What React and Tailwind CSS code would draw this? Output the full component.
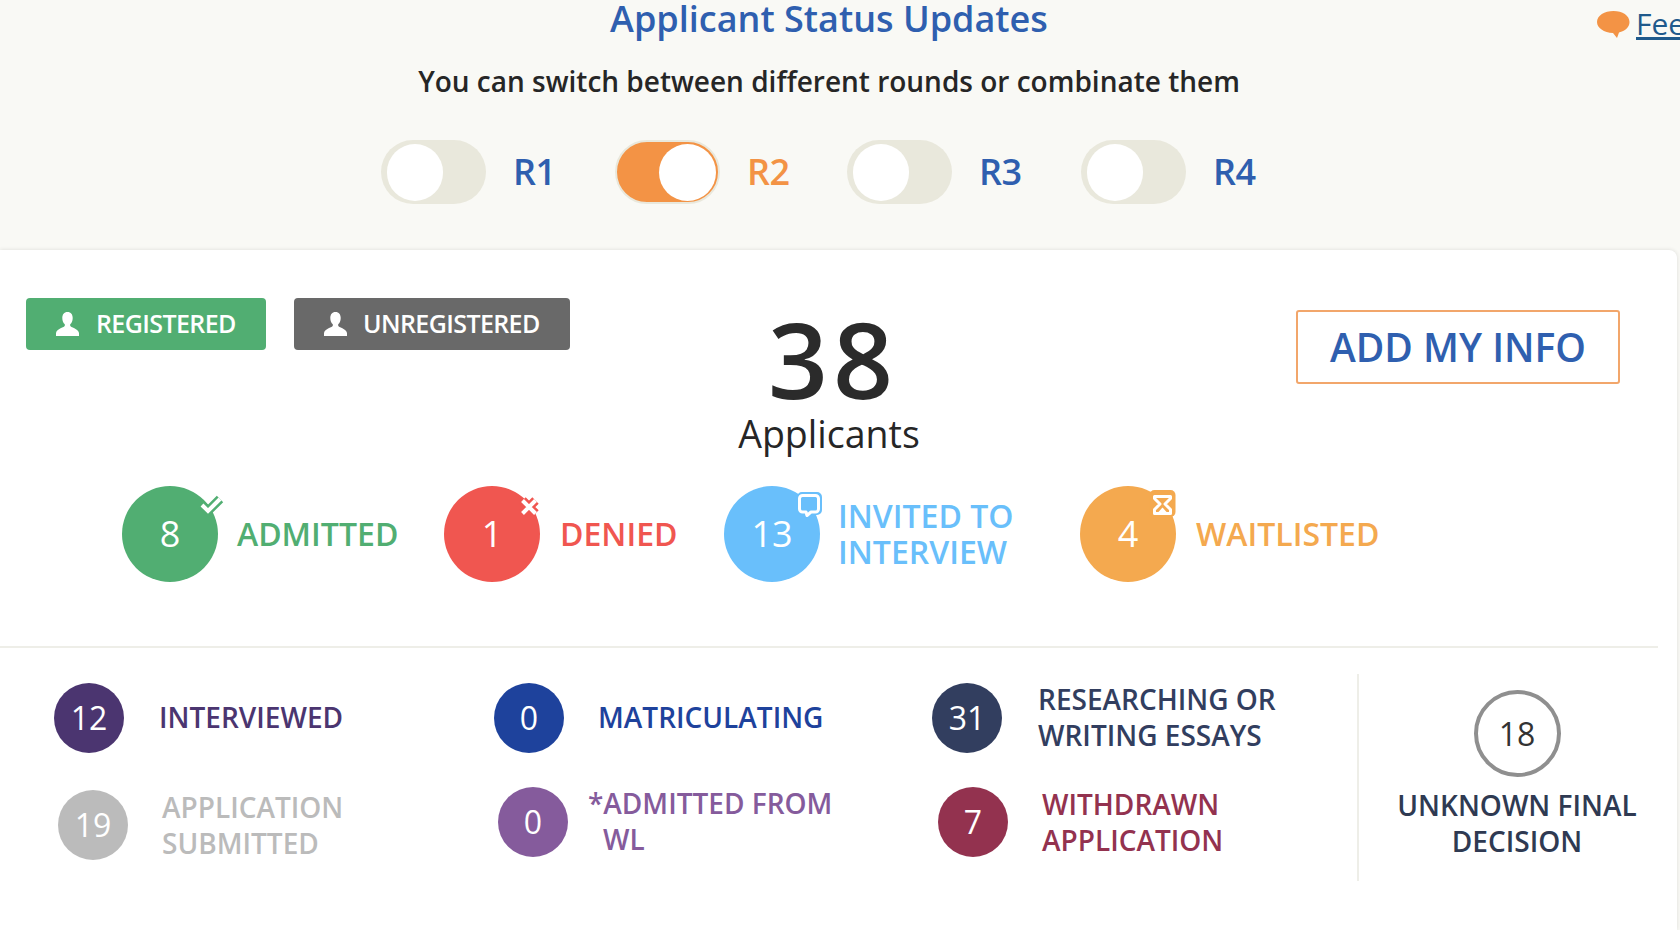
import React from 'react';

const rounds = [
  { label: 'R1', cell: 'w-[234px]', active: false },
  { label: 'R2', cell: 'w-[232px]', active: true },
  { label: 'R3', cell: 'w-[234px]', active: false },
  { label: 'R4', cell: 'w-[200px]', active: false },
];

const PersonIcon = () => (
  <svg width="23" height="24" viewBox="0 0 23 24" fill="#fff">
    <path d="M11.5 0C8 0 6.3 2.6 6.3 6c0 2.6 1 5 2.5 6.3v1.5C8.800 15.500 0.500 16.500 0 21v3h23v-3c-.5-4.500-8.800-5.500-8.800-7.200v-1.500c1.500-1.300 2.500-3.700 2.500-6.300 0-3.400-1.700-6-5.200-6z" />
  </svg>
);

const CheckBadge = () => (
  <svg width="27" height="21" viewBox="0 0 27 21" fill="none" className="absolute left-[76px] top-[8px] overflow-visible">
    <path d="M4 11 L10 17 L22 5" stroke="#51ae72" strokeWidth="9" />
    <path d="M4 11 L10 17 L22 5" stroke="#fff" strokeWidth="4" />
  </svg>
);

const CrossBadge = () => (
  <svg width="24" height="24" viewBox="0 0 24 24" fill="none" className="absolute left-[75px] top-[8px] overflow-visible">
    <path d="M3.500 6.500 L16.500 19.500 M16.500 6.500 L3.500 19.500" stroke="#f05650" strokeWidth="9" />
    <path d="M3.500 6.500 L16.500 19.500 M16.500 6.500 L3.500 19.500" stroke="#fff" strokeWidth="4" />
  </svg>
);

const BubbleBadge = () => (
  <svg width="25" height="28" viewBox="0 0 25 28" className="absolute left-[73px] top-[6px]">
    <path d="M5 0h15a5 5 0 0 1 5 5v13a5 5 0 0 1-5 5h-5l-5 5-2-5H5a5 5 0 0 1-5-5V5a5 5 0 0 1 5-5z" fill="#69bffb" />
    <path d="M5.500 3.500h13a3 3 0 0 1 3 3v10.500a3 3 0 0 1-3 3h-4.500l-4 3.500-1-3.500H5.500a3 3 0 0 1-3-3V6.500a3 3 0 0 1 3-3z" fill="#69bffb" stroke="#fff" strokeWidth="3" strokeLinejoin="round" />
  </svg>
);

const HourglassBadge = () => (
  <svg width="27" height="27" viewBox="0 0 27 27" className="absolute left-[69px] top-[4px]">
    <rect x="0.500" y="0" width="26" height="27" rx="5" fill="#f4a94f" />
    <path d="M5.500 6.500h16v2l-5.500 5.500 5.500 5.500v4h-16v-4l5.500-5.500-5.500-5.500z" fill="#f4a94f" stroke="#fff" strokeWidth="3" strokeLinejoin="round" />
    <path d="M9 22.500h9l-4.500-5z" fill="#fff" />
  </svg>
);

const StatusItem = ({ value, bg, text, cell, gap, badge, children }) => (
  <div className={`flex items-center ${cell}`}>
    <div className={`relative w-24 h-24 rounded-full flex items-center justify-center text-white text-[36px] shrink-0 ${bg}`}>
      {value}
      {badge}
    </div>
    <div className={`text-[32px] leading-[36px] font-semibold ${text} ${gap}`}>{children}</div>
  </div>
);

const SmallItem = ({ value, bg, text, className, gap, children }) => (
  <div className={`flex items-center ${className}`}>
    <div className={`w-[70px] h-[70px] rounded-full flex items-center justify-center text-white text-[32px] shrink-0 ${bg}`}>
      {value}
    </div>
    <div className={`text-[28px] leading-[36px] font-semibold ${text} ${gap}`}>{children}</div>
  </div>
);

export default function App() {
  return (
    <div className="relative w-[1680px] h-[930px] overflow-hidden bg-[#f9f9f5] font-['Open_Sans',sans-serif]">
      {/* Feedback tab */}
      <div className="absolute left-[1597px] top-[4px] flex items-center gap-[6px] whitespace-nowrap">
        <svg width="33" height="30" viewBox="0 0 33 30">
          <path d="M16.500 2C7.500 2 0 6.500 0 13c0 6 7 10.500 16 11l4 5 2-5.500c6-1.500 10.500-5 10.500-10.500C32.500 6.500 25.500 2 16.500 2z" fill="#f39345" />
        </svg>
        <a className="text-[30px] leading-[40px] text-[#1f5a8c] underline">Feedback</a>
      </div>

      <header className="h-[250px] w-[1658px] flex flex-col items-center">
        <h1 className="text-[36px] leading-[38px] font-semibold text-[#2f5faf]">Applicant Status Updates</h1>
        <p className="mt-[25px] text-[28px] leading-[36px] font-semibold text-[#262626]">
          You can switch between different rounds or combinate them
        </p>
        <div className="mt-[41px] self-start ml-[381px] flex">
          {rounds.map((r) => (
            <div key={r.label} className={`flex items-center ${r.cell}`}>
              {r.active ? (
                <div className="w-[105px] h-[64px] rounded-full bg-[#f39345] border-2 border-[#e9e8dc] flex items-center justify-end pr-[2px]">
                  <div className="w-[57px] h-[57px] rounded-full bg-white" />
                </div>
              ) : (
                <div className="w-[105px] h-[64px] rounded-full bg-[#e9e8dc] flex items-center pl-[6px]">
                  <div className="w-[56px] h-[57px] rounded-full bg-white" />
                </div>
              )}
              <span className={`ml-[27px] text-[36px] leading-[40px] font-semibold tracking-[-0.5px] ${r.active ? 'text-[#f39345]' : 'text-[#2f5faf]'}`}>
                {r.label}
              </span>
            </div>
          ))}
        </div>
      </header>

      <main className="w-[1677px] h-[680px] bg-white rounded-tr-lg shadow-[0_0_4px_rgba(0,0,0,0.12)]">
        <div className="flex items-start h-[236px] pt-[48px]">
          <div className="w-[660px] pl-[26px] flex gap-[28px]">
            <div className="w-[240px] h-[52px] rounded bg-[#51ae72] flex items-center pl-[30px] gap-[17px] text-white text-[25px] font-semibold tracking-[-0.6px]">
              <PersonIcon />
              REGISTERED
            </div>
            <div className="w-[276px] h-[52px] rounded bg-[#696969] flex items-center pl-[30px] gap-[16px] text-white text-[25px] font-semibold tracking-[-0.6px]">
              <PersonIcon />
              UNREGISTERED
            </div>
          </div>
          <div className="w-[338px] flex flex-col items-center mt-[16px] text-[#2b2b2b]">
            <div className="pl-[8px] text-[105px] leading-[90px] font-semibold tracking-[5px]">38</div>
            <div className="mt-2 text-[37.5px] leading-[44px] text-[#262626]">Applicants</div>
          </div>
          <div className="ml-[298px] mt-[12px] w-[324px] h-[74px] rounded-[3px] border-2 border-[#f2a66b] flex items-center justify-center text-[39px] font-semibold text-[#2f5faf]">
            ADD MY INFO
          </div>
        </div>

        <div className="h-[162px] w-[1658px] border-b-2 border-[#eeeee8] pl-[122px] flex items-start">
          <StatusItem value="8" bg="bg-[#51ae72]" text="text-[#51ae72]" cell="w-[322px]" gap="ml-[19px]" badge={<CheckBadge />}>
            ADMITTED
          </StatusItem>
          <StatusItem value="1" bg="bg-[#f05650]" text="text-[#f05650]" cell="w-[280px]" gap="ml-[20px]" badge={<CrossBadge />}>
            DENIED
          </StatusItem>
          <StatusItem value="13" bg="bg-[#69bffb]" text="text-[#69bffb]" cell="w-[356px]" gap="ml-[18px]" badge={<BubbleBadge />}>
            INVITED TO<br />INTERVIEW
          </StatusItem>
          <StatusItem value="4" bg="bg-[#f4a94f]" text="text-[#f4a94f]" cell="w-[320px]" gap="ml-[20px]" badge={<HourglassBadge />}>
            WAITLISTED
          </StatusItem>
        </div>

        <div className="flex items-start pt-[26px]">
          <div className="w-[494px] pl-[54px] pt-[9px]">
            <SmallItem value="12" bg="bg-[#4b3570]" text="text-[#4b3570]" gap="ml-[35px] mb-[2px]">INTERVIEWED</SmallItem>
            <SmallItem value="19" bg="bg-[#bbbbbb]" text="text-[#bbbbbb]" gap="ml-[34px]" className="ml-[4px] mt-[36px]">
              APPLICATION<br />SUBMITTED
            </SmallItem>
          </div>
          <div className="w-[438px] pt-[9px]">
            <SmallItem value="0" bg="bg-[#1e429c]" text="text-[#1e429c]" gap="ml-[34px] mb-[2px]">MATRICULATING</SmallItem>
            <SmallItem value="0" bg="bg-[#855b9c]" text="text-[#855b9c]" gap="ml-[20px] -mt-[2px] pl-[15px] -indent-[15px]" className="ml-[4px] mt-[34px]">
              *ADMITTED FROM<br />WL
            </SmallItem>
          </div>
          <div className="w-[425px] pt-[9px]">
            <SmallItem value="31" bg="bg-[#323e5f]" text="text-[#323e5f]" gap="ml-[36px] -mt-[3px]">
              RESEARCHING OR<br />WRITING ESSAYS
            </SmallItem>
            <SmallItem value="7" bg="bg-[#93324f]" text="text-[#93324f]" gap="ml-[34px]" className="ml-[6px] mt-[33px]">
              WITHDRAWN<br />APPLICATION
            </SmallItem>
          </div>
          <div className="w-[318px] h-[207px] border-l-2 border-[#eeeee8] flex flex-col items-center pt-[16px]">
            <div className="w-[87px] h-[87px] rounded-full border-4 border-[#8f8f8f] flex items-center justify-center text-[32px] text-[#333]">
              18
            </div>
            <div className="mt-[10px] text-center text-[28px] leading-[36px] font-semibold text-[#2f3a52]">
              UNKNOWN FINAL<br />DECISION
            </div>
          </div>
        </div>
      </main>
    </div>
  );
}
